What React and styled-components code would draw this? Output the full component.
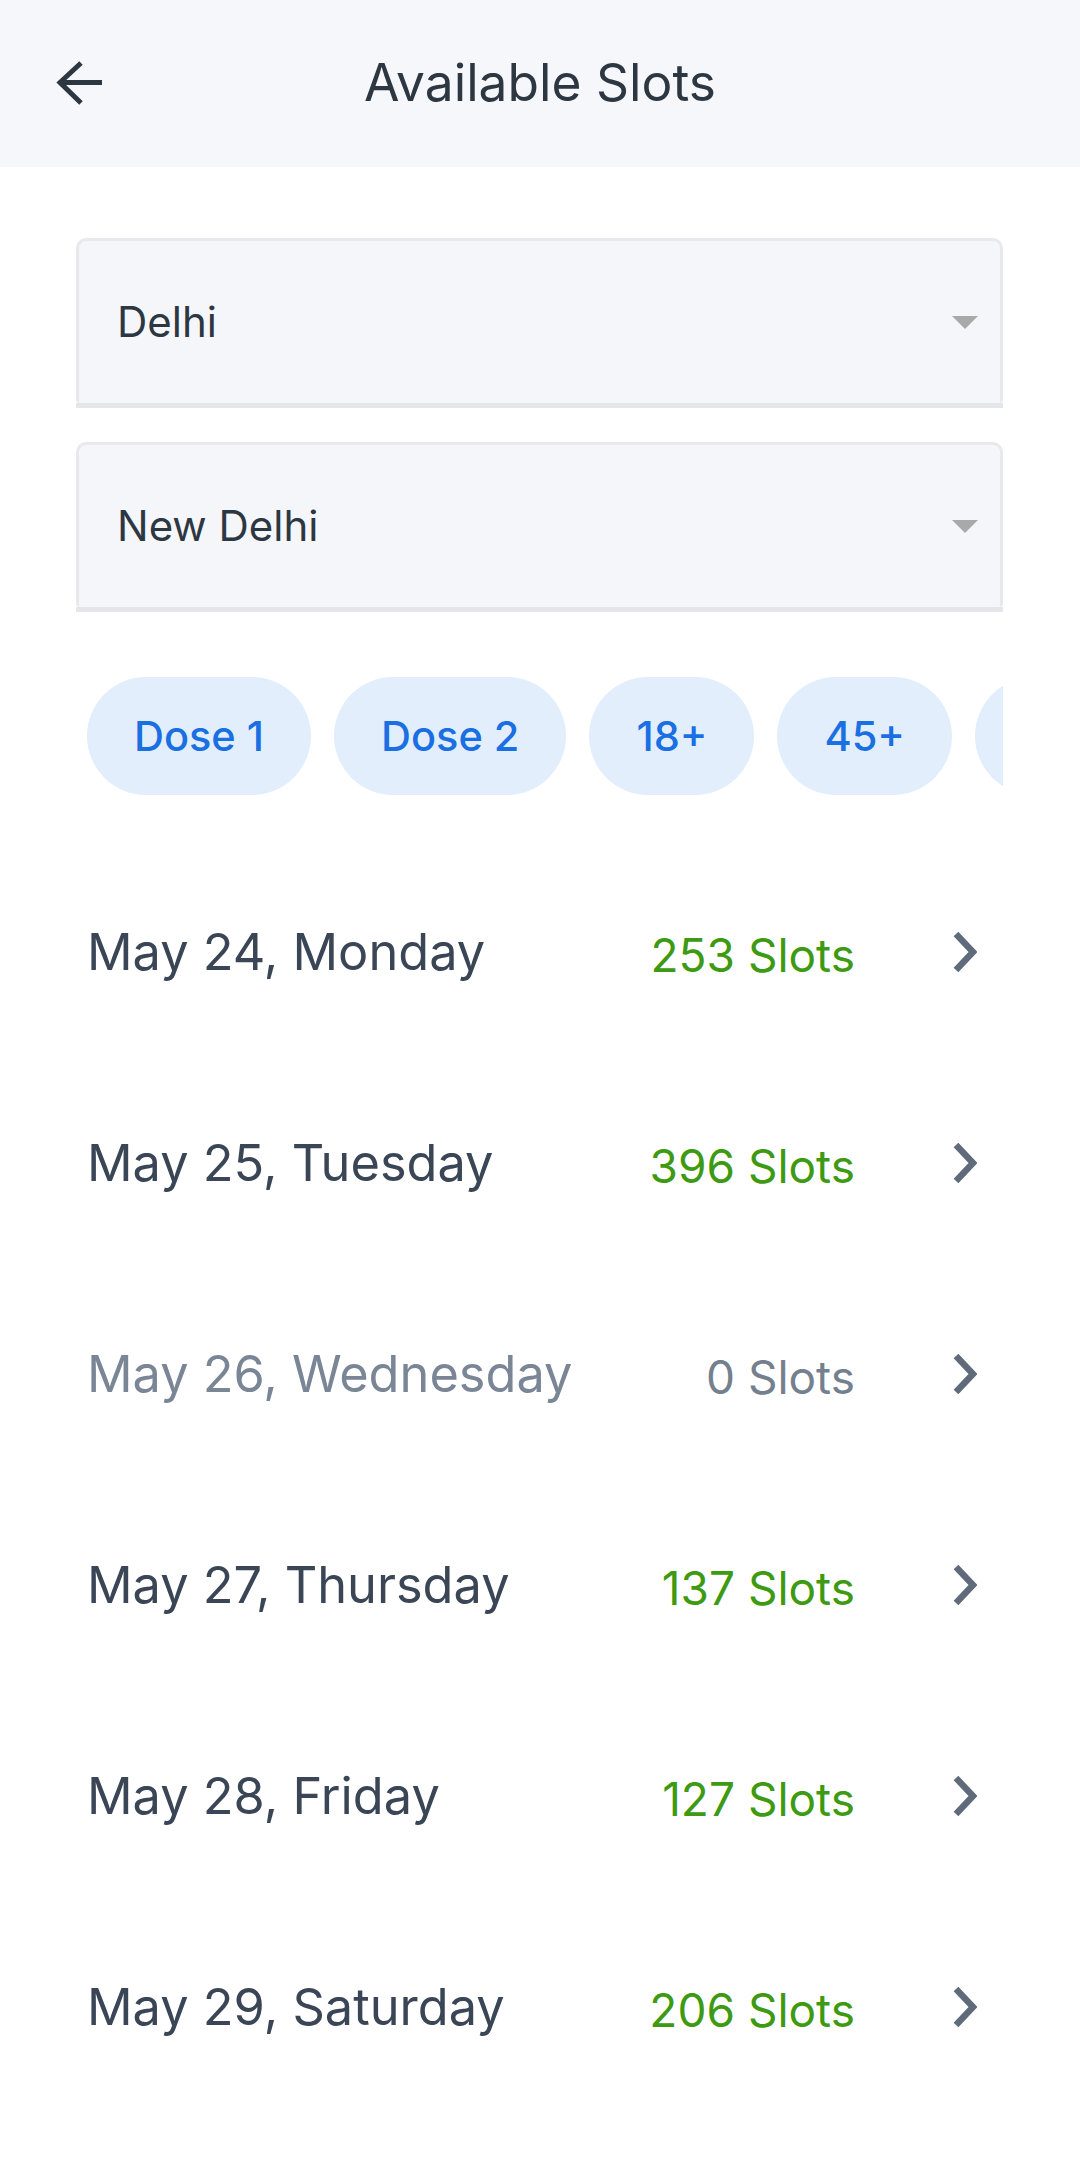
import styled, { createGlobalStyle } from "styled-components";

const GlobalStyle = createGlobalStyle`
  html, body {
    margin: 0;
    padding: 0;
    background: #ffffff;
  }
  body {
    font-family: Inter, "Noto Sans", "Liberation Sans", sans-serif;
    -webkit-font-smoothing: antialiased;
  }
`;

const Page = styled.div`
  width: 1080px;
  min-height: 2159px;
  background: #ffffff;
`;

const Header = styled.header`
  height: 167px;
  background: #f5f7fa;
  display: grid;
  grid-template-columns: 1fr auto 1fr;
  align-items: center;
  padding: 0 0 0 55px;
  box-sizing: border-box;
`;

const BackButton = styled.button`
  border: none;
  background: transparent;
  padding: 0;
  width: 50px;
  height: 46px;
  display: flex;
  align-items: center;
  cursor: pointer;
  justify-self: start;
`;

const Title = styled.h1`
  margin: -3px 0 0 -55px;
  font-size: 51.5px;
  line-height: 60px;
  font-weight: 400;
  color: #2d3742;
`;

const Content = styled.main`
  padding: 71px 77px 0 76px;
`;

const SelectWrap = styled.div`
  border-bottom: 5px solid #e4e6ea;
  margin-bottom: 34px;
`;

const SelectBox = styled.div`
  height: 165px;
  box-sizing: border-box;
  border: 3px solid #e7e9ec;
  border-bottom-width: 0;
  border-radius: 10px 10px 4px 4px;
  background: #f5f6fa;
  display: flex;
  align-items: center;
  justify-content: space-between;
  padding: 0 22px 0 38px;
`;

const SelectText = styled.span`
  font-size: 42px;
  line-height: 50px;
  color: #2d3742;
`;

const Caret = styled.span`
  width: 0;
  height: 0;
  border-left: 13.5px solid transparent;
  border-right: 13.5px solid transparent;
  border-top: 13px solid #a9a9a9;
`;

const ChipRow = styled.div`
  display: flex;
  gap: 23px;
  overflow: hidden;
  padding-left: 11px;
  margin-top: 65px;
`;

const Chip = styled.button`
  flex: none;
  height: 118px;
  padding: 0 47px;
  border: none;
  border-radius: 59px;
  background: #e2eefc;
  color: #1a6fe2;
  font-family: inherit;
  font-size: 41.5px;
  font-weight: 500;
`;

const SlotList = styled.ul`
  list-style: none;
  margin: 51px 0 0;
  padding: 0;
`;

const SlotRow = styled.li`
  height: 211px;
  display: flex;
  align-items: center;
  padding: 0 26px 0 11px;
`;

const DateLabel = styled.span`
  flex: 1;
  font-size: 50.5px;
  line-height: 60px;
  color: ${(p) => (p.$empty ? "#7a8696" : "#3a4656")};
`;

const SlotCount = styled.span`
  font-size: 46px;
  line-height: 56px;
  margin-top: 6px;
  color: ${(p) => (p.$empty ? "#75808e" : "#3d9a12")};
`;

const Chevron = styled.svg`
  width: 24px;
  height: 40px;
  margin-left: 98px;
  flex: none;
`;

const days = [
  { date: "May 24, Monday", slots: 253 },
  { date: "May 25, Tuesday", slots: 396 },
  { date: "May 26, Wednesday", slots: 0 },
  { date: "May 27, Thursday", slots: 137 },
  { date: "May 28, Friday", slots: 127 },
  { date: "May 29, Saturday", slots: 206 },
];

const filters = ["Dose 1", "Dose 2", "18+", "45+", "Free"];

export default function App() {
  return (
    <Page>
      <GlobalStyle />
      <Header>
        <BackButton aria-label="Back">
          <svg width="48" height="46" viewBox="0 0 48 46" fill="none">
            <path
              d="M47 21.5H6M26 2L5 21.5L26 42"
              stroke="#2d3742"
              strokeWidth="5"
            />
          </svg>
        </BackButton>
        <Title>Available Slots</Title>
        <div />
      </Header>
      <Content>
        <SelectWrap>
          <SelectBox>
            <SelectText>Delhi</SelectText>
            <Caret />
          </SelectBox>
        </SelectWrap>
        <SelectWrap>
          <SelectBox>
            <SelectText>New Delhi</SelectText>
            <Caret />
          </SelectBox>
        </SelectWrap>
        <ChipRow>
          {filters.map((f) => (
            <Chip key={f}>{f}</Chip>
          ))}
        </ChipRow>
        <SlotList>
          {days.map((d) => (
            <SlotRow key={d.date}>
              <DateLabel $empty={d.slots === 0}>{d.date}</DateLabel>
              <SlotCount $empty={d.slots === 0}>{d.slots} Slots</SlotCount>
              <Chevron viewBox="0 0 24 40" fill="none">
                <path d="M3 2L20 20L3 38" stroke="#5f6b7a" strokeWidth="6.5" />
              </Chevron>
            </SlotRow>
          ))}
        </SlotList>
      </Content>
    </Page>
  );
}
